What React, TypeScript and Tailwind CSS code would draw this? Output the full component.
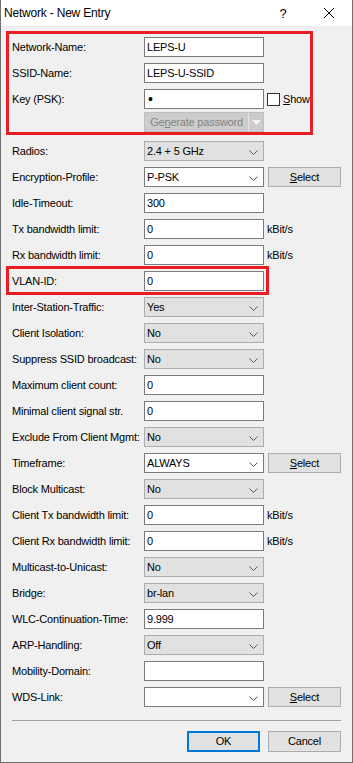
// Network - New Entry dialog (Windows 10 style form)
import type { ReactNode } from 'react';

const FONT = "font-['Liberation_Sans',Arial,sans-serif]";

function Chevron() {
  return (
    <svg width="9" height="5" viewBox="0 0 9 5" className="absolute right-[5px] top-[8px]">
      <path d="M0.5 0.5 L4.5 4.5 L8.5 0.5" fill="none" stroke="#5a5a5a" strokeWidth="1" />
    </svg>
  );
}

function TextBox({ value = '' }: { value?: ReactNode }) {
  return (
    <div className="h-5 w-[120px] shrink-0 border border-[#7a7a7a] bg-white pl-[2px] flex items-center">
      {value}
    </div>
  );
}

// gray = read-only drop-down list, white = editable combo box
function Combo({ value = '', editable = false }: { value?: string; editable?: boolean }) {
  return (
    <div
      className={`relative h-5 w-[120px] shrink-0 border pl-[2px] flex items-center ${
        editable ? 'bg-white border-[#7a7a7a]' : 'bg-[#e1e1e1] border-[#adadad]'
      }`}
    >
      {value}
      <Chevron />
    </div>
  );
}

function SelectBtn() {
  return (
    <div className="ml-[4px] h-5 w-[73px] border border-[#adadad] bg-[#e1e1e1] flex items-center justify-center">
      <span><u>S</u>elect</span>
    </div>
  );
}

function Unit() {
  return <span className="ml-[3px]">kBit/s</span>;
}

function Row({ label, children }: { label: string; children: ReactNode }) {
  return (
    <div className="h-5 flex items-center">
      <div className="w-[132px] shrink-0 whitespace-nowrap">{label}</div>
      {children}
    </div>
  );
}

export default function App() {
  return (
    <div className={`${FONT} w-[353px] h-[763px] bg-[#f0f0f0] border-x border-b border-[#6f6f6f] flex flex-col text-black text-[11px] tracking-[-0.2px] leading-none`}>

      {/* Title bar */}
      <div className="h-[26px] bg-white flex items-center shrink-0">
        <div className="flex-1 pl-[3px] text-[12px]">Network - New Entry</div>
        <div className="w-[46px] h-full flex items-center justify-center text-[13px]">?</div>
        <div className="w-[46px] h-full flex items-center justify-center">
          <svg width="10" height="10" viewBox="0 0 10 10">
            <path d="M0 0 L10 10 M10 0 L0 10" stroke="#000" strokeWidth="1" />
          </svg>
        </div>
      </div>

      <div className="flex flex-col px-[11px] pt-[11px]">

        {/* Highlighted: name / ssid / key */}
        <div className="relative flex flex-col">
          <div className="absolute -left-[6px] -top-[6px] -bottom-[3px] right-[28px] border-[3px] border-[#ec1c24] pointer-events-none" />
          <div className="flex flex-col gap-[6px]">
            <Row label="Network-Name:"><TextBox value="LEPS-U" /></Row>
            <Row label="SSID-Name:"><TextBox value="LEPS-U-SSID" /></Row>
            <Row label="Key (PSK):">
              <TextBox value={<span className="text-[14px] leading-none pl-[1px]">•</span>} />
              <div className="ml-[3px] w-[13px] h-[13px] border border-[#333] bg-white" />
              <span className="ml-[3px]"><u>S</u>how</span>
            </Row>
          </div>
          <div className="mt-[3px] ml-[132px] h-5 w-[120px] border border-[#bfbfbf] bg-[#cccccc] flex text-[#838383]">
            <div className="flex-1 flex items-center justify-center">
              <span>Ge<u>n</u>erate password</span>
            </div>
            <div className="w-px bg-[#e6e6e6]" />
            <div className="w-[14px] flex items-center justify-center">
              <svg width="9" height="5" viewBox="0 0 9 5">
                <path d="M0 0 L9 0 L4.5 5 Z" fill="#f4f4f4" />
              </svg>
            </div>
          </div>
        </div>

        <div className="mt-[9px] flex flex-col gap-[6px]">
          <Row label="Radios:"><Combo value="2.4 + 5 GHz" /></Row>
          <Row label="Encryption-Profile:"><Combo value="P-PSK" editable /><SelectBtn /></Row>
          <Row label="Idle-Timeout:"><TextBox value="300" /></Row>
          <Row label="Tx bandwidth limit:"><TextBox value="0" /><Unit /></Row>
          <Row label="Rx bandwidth limit:"><TextBox value="0" /><Unit /></Row>

          {/* Highlighted: VLAN */}
          <div className="relative">
            <div className="absolute -left-[6px] -top-[5px] -bottom-[4px] right-[72px] border-[3px] border-[#ec1c24] pointer-events-none" />
            <Row label="VLAN-ID:"><TextBox value="0" /></Row>
          </div>

          <Row label="Inter-Station-Traffic:"><Combo value="Yes" /></Row>
          <Row label="Client Isolation:"><Combo value="No" /></Row>
          <Row label="Suppress SSID broadcast:"><Combo value="No" /></Row>
          <Row label="Maximum client count:"><TextBox value="0" /></Row>
          <Row label="Minimal client signal str."><TextBox value="0" /></Row>
          <Row label="Exclude From Client Mgmt:"><Combo value="No" /></Row>
          <Row label="Timeframe:"><Combo value="ALWAYS" editable /><SelectBtn /></Row>
          <Row label="Block Multicast:"><Combo value="No" /></Row>
          <Row label="Client Tx bandwidth limit:"><TextBox value="0" /><Unit /></Row>
          <Row label="Client Rx bandwidth limit:"><TextBox value="0" /><Unit /></Row>
          <Row label="Multicast-to-Unicast:"><Combo value="No" /></Row>
          <Row label="Bridge:"><Combo value="br-lan" /></Row>
          <Row label="WLC-Continuation-Time:"><TextBox value="9.999" /></Row>
          <Row label="ARP-Handling:"><Combo value="Off" /></Row>
          <Row label="Mobility-Domain:"><TextBox /></Row>
          <Row label="WDS-Link:"><Combo editable /><SelectBtn /></Row>
        </div>

        <div className="mt-[13px] h-px bg-[#a0a0a0]" />

        {/* Footer buttons */}
        <div className="mt-[10px] flex justify-end gap-[8px]">
          <div className="h-[21px] w-[73px] border-2 border-[#0078d7] bg-[#e1e1e1] flex items-center justify-center">OK</div>
          <div className="h-[21px] w-[73px] border border-[#adadad] bg-[#e1e1e1] flex items-center justify-center">Cancel</div>
        </div>
      </div>
    </div>
  );
}
